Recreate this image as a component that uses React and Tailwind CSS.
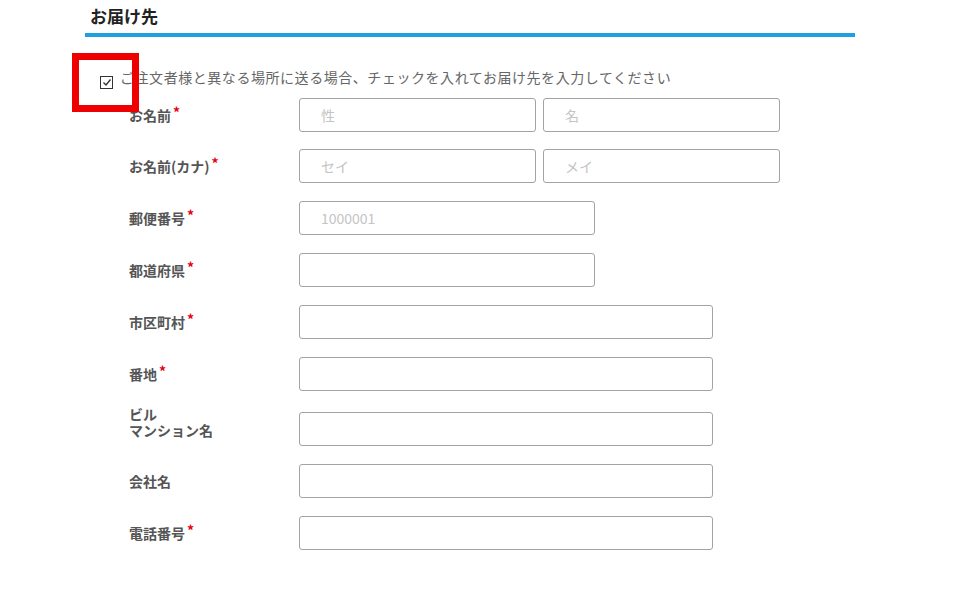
import React from "react";

const font = { fontFamily: '"Noto Sans CJK JP", "Noto Sans", sans-serif' };

function Req() {
  return <span className="relative -top-[3px] ml-[2px] text-[#e60012] font-bold">*</span>;
}

function Input({ w, ph }) {
  return (
    <div
      className={`${w} h-[34px] border border-[#a3a3a3] rounded-[3px] bg-white flex items-center pl-[21px] text-[14px] text-[#c4c4c4]`}
    >
      {ph || ""}
    </div>
  );
}

function Row({ label, req, children, className = "" }) {
  return (
    <div className={`flex items-center ${className}`}>
      <div className="w-[170px] text-[14px] font-bold text-[#555]">
        {label}
        {req && <Req />}
      </div>
      <div className="flex gap-[7px]">{children}</div>
    </div>
  );
}

export default function App() {
  return (
    <div className="w-[956px] h-[594px] bg-white relative overflow-hidden" style={font}>
      <div className="ml-[85px] w-[770px]">
        <div className="h-[33px] pl-[5px] pt-[4px] text-[17px] font-bold text-[#222] leading-[24px]">
          お届け先
        </div>
        <div className="h-[4px] bg-[#1ea0e1]" />
        <div className="mt-[32px] flex items-center pl-[15px] h-[16px]">
          <span className="relative top-[5px] w-[13px] h-[13px] border border-[#333] flex items-center justify-center">
            <svg width="10" height="9" viewBox="0 0 10 9">
              <path d="M1.5 4.5 L4 7 L8.5 1.5" fill="none" stroke="#333" strokeWidth="1.4" />
            </svg>
          </span>
          <span className="ml-[7px] text-[14px] text-[#666] tracking-[0.55px] leading-[16px]">
            ご注文者様と異なる場所に送る場合、チェックを入れてお届け先を入力してください
          </span>
        </div>
        <div className="mt-[13px] pl-[44px] flex flex-col gap-[18px]">
          <Row label="お名前" req>
            <Input w="w-[237px]" ph="性" />
            <Input w="w-[237px]" ph="名" />
          </Row>
          <Row label="お名前(カナ)" req className="-mt-[1px]">
            <Input w="w-[237px]" ph="セイ" />
            <Input w="w-[237px]" ph="メイ" />
          </Row>
          <Row label="郵便番号" req>
            <Input w="w-[296px]" ph="1000001" />
          </Row>
          <Row label="都道府県" req>
            <Input w="w-[296px]" />
          </Row>
          <Row label="市区町村" req>
            <Input w="w-[414px]" />
          </Row>
          <Row label="番地" req>
            <Input w="w-[414px]" />
          </Row>
          <div className="flex items-start mt-[3px]">
            <div className="w-[170px] -mt-[6px] text-[14px] font-bold text-[#555] leading-[16px]">
              <div>ビル</div>
              <div>マンション名</div>
            </div>
            <Input w="w-[414px]" />
          </div>
          <Row label="会社名">
            <Input w="w-[414px]" />
          </Row>
          <Row label="電話番号" req>
            <Input w="w-[414px]" />
          </Row>
        </div>
      </div>
      <div className="absolute left-[72px] top-[53px] w-[67px] h-[59px] border-[7px] border-[#ee0000]" />
    </div>
  );
}
